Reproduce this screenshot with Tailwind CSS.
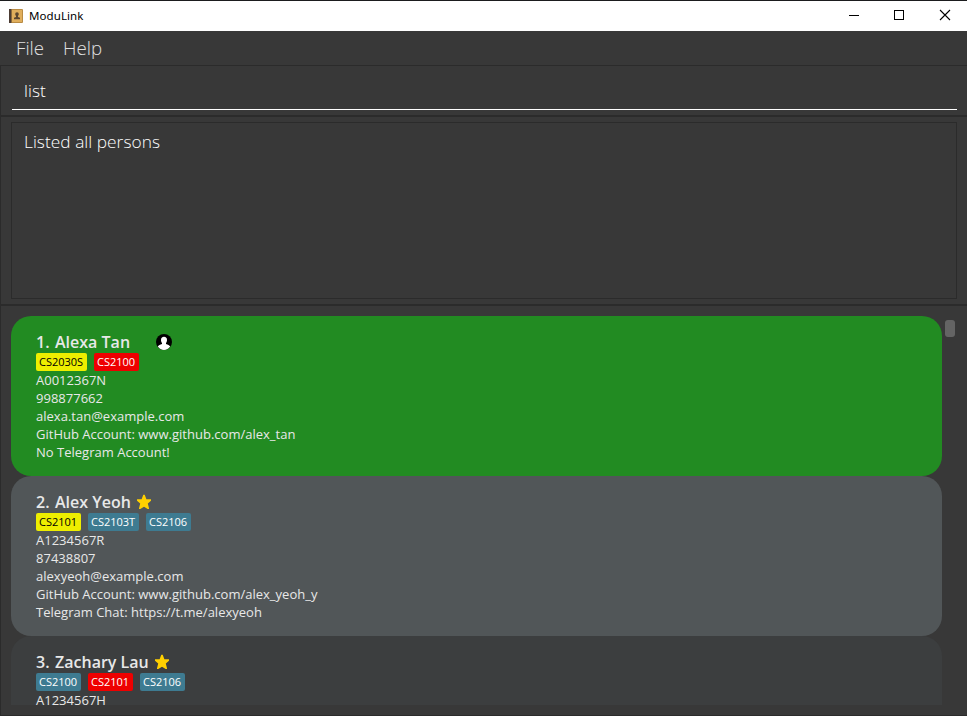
<!DOCTYPE html>
<html lang="en">
<head>
<meta charset="utf-8">
<title>ModuLink</title>
<script src="https://cdn.jsdelivr.net/npm/@tailwindcss/browser@4"></script>
</head>
<body class="w-[967px] h-[716px] overflow-hidden bg-[#383838] font-['Open_Sans',sans-serif] text-[#e8e8e8]">
<div class="flex flex-col w-[967px] h-[716px] border-t border-[#1b1c1e]">
  <header class="flex items-center h-[30px] shrink-0 bg-white text-black">
    <svg class="ml-[9px] w-[14px] h-[14px] shrink-0" viewBox="0 0 14 14">
      <rect width="14" height="14" rx="1" fill="#b98b43"/>
      <rect x="3" y="1" width="10" height="12" fill="#e0ae5c"/>
      <rect width="2.4" height="14" fill="#4c3c34"/>
      <path d="M8 3.200a1.800 1.800 0 0 1 1.800 1.900c0 .9-.4 1.300-.8 1.800v1l2 .8v1.600H5V8.700l2-.8v-1c-.5-.5-.8-.9-.8-1.800A1.800 1.800 0 0 1 8 3.200z" fill="#5b4630"/>
    </svg>
    <span class="ml-[6px] text-[11.500px] leading-[16px] font-['Noto_Sans',sans-serif] tracking-[0.080px]">ModuLink</span>
    <div class="ml-auto flex">
      <svg class="w-[45px] h-[30px]" viewBox="0 0 45 30"><path d="M17 14.500h10" stroke="#000"/></svg>
      <svg class="w-[46px] h-[30px]" viewBox="0 0 46 30"><rect x="17.500" y="9.500" width="9" height="9" fill="none" stroke="#000"/></svg>
      <svg class="w-[44px] h-[30px]" viewBox="0 0 44 30"><path d="M17 9l10 10M27 9L17 19" stroke="#000" stroke-width="1.100"/></svg>
    </div>
  </header>
  <nav class="flex items-center h-[34px] shrink-0 pl-[16px] gap-[20px] text-[18.700px] leading-[34px] font-light text-[#e0e0e0]">
    <span class="w-[27px] whitespace-nowrap">File</span><span>Help</span>
  </nav>
  <main class="flex flex-col flex-1 border-l border-t border-b border-[#2b2b2b]">
    <section class="h-[51px] shrink-0 border-b-2 border-[#2b2b2b] pl-[11px] pr-[10px]">
      <div class="h-[44px] border-b border-white pl-[12px] pt-[13px] text-[17.300px] leading-[24px] tracking-[0.040px] font-light text-white">list</div>
    </section>
    <section class="h-[189px] shrink-0 border-b-2 border-[#2b2b2b] pt-[5px] pl-[10px] pr-[10px]">
      <div class="h-[177px] border border-[#2b2b2b] pl-[12px] pt-[7px] text-[17.300px] leading-[24px] tracking-[0.040px] font-light text-white">Listed all persons</div>
    </section>
    <section class="flex pt-[10px] pl-[10px] h-[399px] shrink-0">
      <div class="w-[931px] h-[389px] overflow-hidden text-[13px] leading-[18px] tracking-[0.010px]">
        <article class="h-[160px] rounded-[20px] bg-[#228b22] pl-[25px] pt-[16px]">
          <div class="flex h-[21px] text-[16px] leading-[21px] font-semibold"><span class="w-[19px]">1.</span><span class="w-[75px] whitespace-nowrap">Alexa Tan</span>
            <svg class="mt-[2px] ml-[26px] w-[16px] h-[16px]" viewBox="0 0 16 16"><circle cx="8" cy="8" r="8" fill="#000"/><path d="M8 2.800c2 0 3 1.300 3 3.100 0 1.500-.5 2.300-1 3v1c1.800.5 3.600 1.100 4.200 2.600A8 8 0 0 1 8 16a8 8 0 0 1-6.200-3.500c.6-1.500 2.400-2.100 4.200-2.600v-1c-.5-.7-1-1.500-1-3 0-1.800 1-3.100 3-3.100z" fill="#fff"/></svg>
          </div>
          <div class="flex gap-[7px] h-[18px] text-[11px] leading-[18px] tracking-[-0.040px]">
            <span class="w-[51px] pl-[3px] rounded-[2px] bg-[#eeee00] text-black">CS2030S</span>
            <span class="w-[45px] pl-[3px] rounded-[2px] bg-[#ee0000] text-white">CS2100</span>
          </div>
          <p>A0012367N</p><p>998877662</p><p>alexa.tan@example.com</p><p>GitHub Account: www.github.com/alex_tan</p><p>No Telegram Account!</p>
        </article>
        <article class="h-[160px] rounded-[20px] bg-[#515658] pl-[25px] pt-[16px]">
          <div class="flex h-[21px] text-[16px] leading-[21px] font-semibold"><span class="w-[19px]">2.</span><span class="w-[76px] whitespace-nowrap">Alex Yeoh</span>
            <svg class="mt-[2px] ml-[6px] w-[14px] h-[15px]" viewBox="0 0 14 15"><path d="M6.300 .8h1.400l1.700 4.400H14v1.600l-3.200 2.700 1.200 4.800v.7h-1.300L7 12.700 3.300 15H2v-.7l1.200-4.800L0 6.800V5.200h4.600z" fill="#ffd000"/></svg>
          </div>
          <div class="flex gap-[7px] h-[18px] text-[11px] leading-[18px] tracking-[-0.040px]">
            <span class="w-[45px] pl-[3px] rounded-[2px] bg-[#eeee00] text-black">CS2101</span>
            <span class="w-[51px] pl-[3px] rounded-[2px] bg-[#3e7b91] text-white">CS2103T</span>
            <span class="w-[45px] pl-[3px] rounded-[2px] bg-[#3e7b91] text-white">CS2106</span>
          </div>
          <p>A1234567R</p><p>87438807</p><p>alexyeoh@example.com</p><p>GitHub Account: www.github.com/alex_yeoh_y</p><p>Telegram Chat: https://t.me/alexyeoh</p>
        </article>
        <article class="h-[160px] rounded-[20px] bg-[#3c3e3f] pl-[25px] pt-[16px]">
          <div class="flex h-[21px] text-[16px] leading-[21px] font-semibold"><span class="w-[19px]">3.</span><span class="w-[94px] whitespace-nowrap">Zachary Lau</span>
            <svg class="mt-[2px] ml-[6px] w-[14px] h-[15px]" viewBox="0 0 14 15"><path d="M6.300 .8h1.400l1.700 4.400H14v1.600l-3.200 2.700 1.200 4.800v.7h-1.300L7 12.700 3.300 15H2v-.7l1.200-4.800L0 6.800V5.200h4.600z" fill="#ffd000"/></svg>
          </div>
          <div class="flex gap-[7px] h-[18px] text-[11px] leading-[18px] tracking-[-0.040px]">
            <span class="w-[45px] pl-[3px] rounded-[2px] bg-[#3e7b91] text-white">CS2100</span>
            <span class="w-[45px] pl-[3px] rounded-[2px] bg-[#ee0000] text-white">CS2101</span>
            <span class="w-[45px] pl-[3px] rounded-[2px] bg-[#3e7b91] text-white">CS2106</span>
          </div>
          <p>A1234567H</p>
        </article>
      </div>
      <div class="ml-[3px] mt-[4px] w-[10px] h-[17px] rounded-[3px] bg-[#646464]"></div>
    </section>
  </main>
</div>
</body>
</html>
